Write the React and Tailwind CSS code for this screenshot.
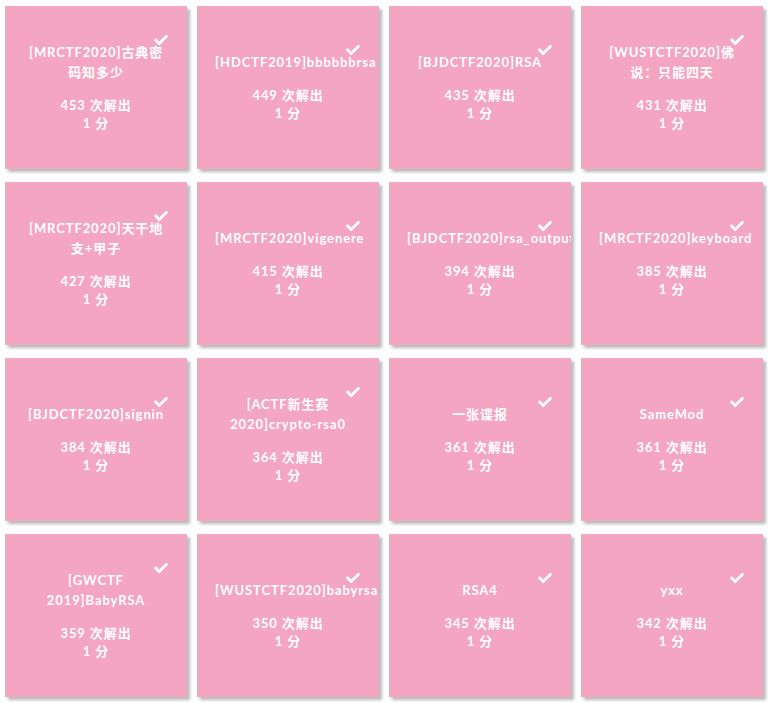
import React from "react";
import { FaCheck } from "react-icons/fa";

const items = [
  ["[MRCTF2020]古典密码知多少", 453],
  ["[HDCTF2019]bbbbbbrsa", 449],
  ["[BJDCTF2020]RSA", 435],
  ["[WUSTCTF2020]佛说：只能四天", 431],
  ["[MRCTF2020]天干地支+甲子", 427],
  ["[MRCTF2020]vigenere", 415],
  ["[BJDCTF2020]rsa_output", 394],
  ["[MRCTF2020]keyboard", 385],
  ["[BJDCTF2020]signin", 384],
  ["[ACTF新生赛2020]crypto-rsa0", 364],
  ["一张谍报", 361],
  ["SameMod", 361],
  ["[GWCTF 2019]BabyRSA", 359],
  ["[WUSTCTF2020]babyrsa", 350],
  ["RSA4", 345],
  ["yxx", 342],
];

function Card({ title, solves }) {
  return (
    <div className="px-[5px]">
      <div className="h-[163px] w-full bg-[#f4a5c1] shadow-[3px_3px_3px_rgba(0,0,0,0.28)] overflow-hidden flex flex-col justify-center px-[18px] text-center text-white font-bold text-[13px] tracking-[0.9px]">
        <p className="relative mb-[14px] leading-[19.5px]">
          <FaCheck className="absolute right-[1px] top-[-10px]" size={14} />
          {title}
        </p>
        <div className="leading-[18px]">
          {solves} 次解出
          <br />1 分
        </div>
      </div>
    </div>
  );
}

export default function App() {
  return (
    <div
      className="w-[768px] h-[703px] bg-white pt-[6px] overflow-hidden"
      style={{ fontFamily: "Lato, 'Noto Sans CJK SC', sans-serif" }}
    >
      <div className="grid grid-cols-4 gap-y-[13px]">
        {items.map(([t, s]) => (
          <Card key={t} title={t} solves={s} />
        ))}
      </div>
    </div>
  );
}
